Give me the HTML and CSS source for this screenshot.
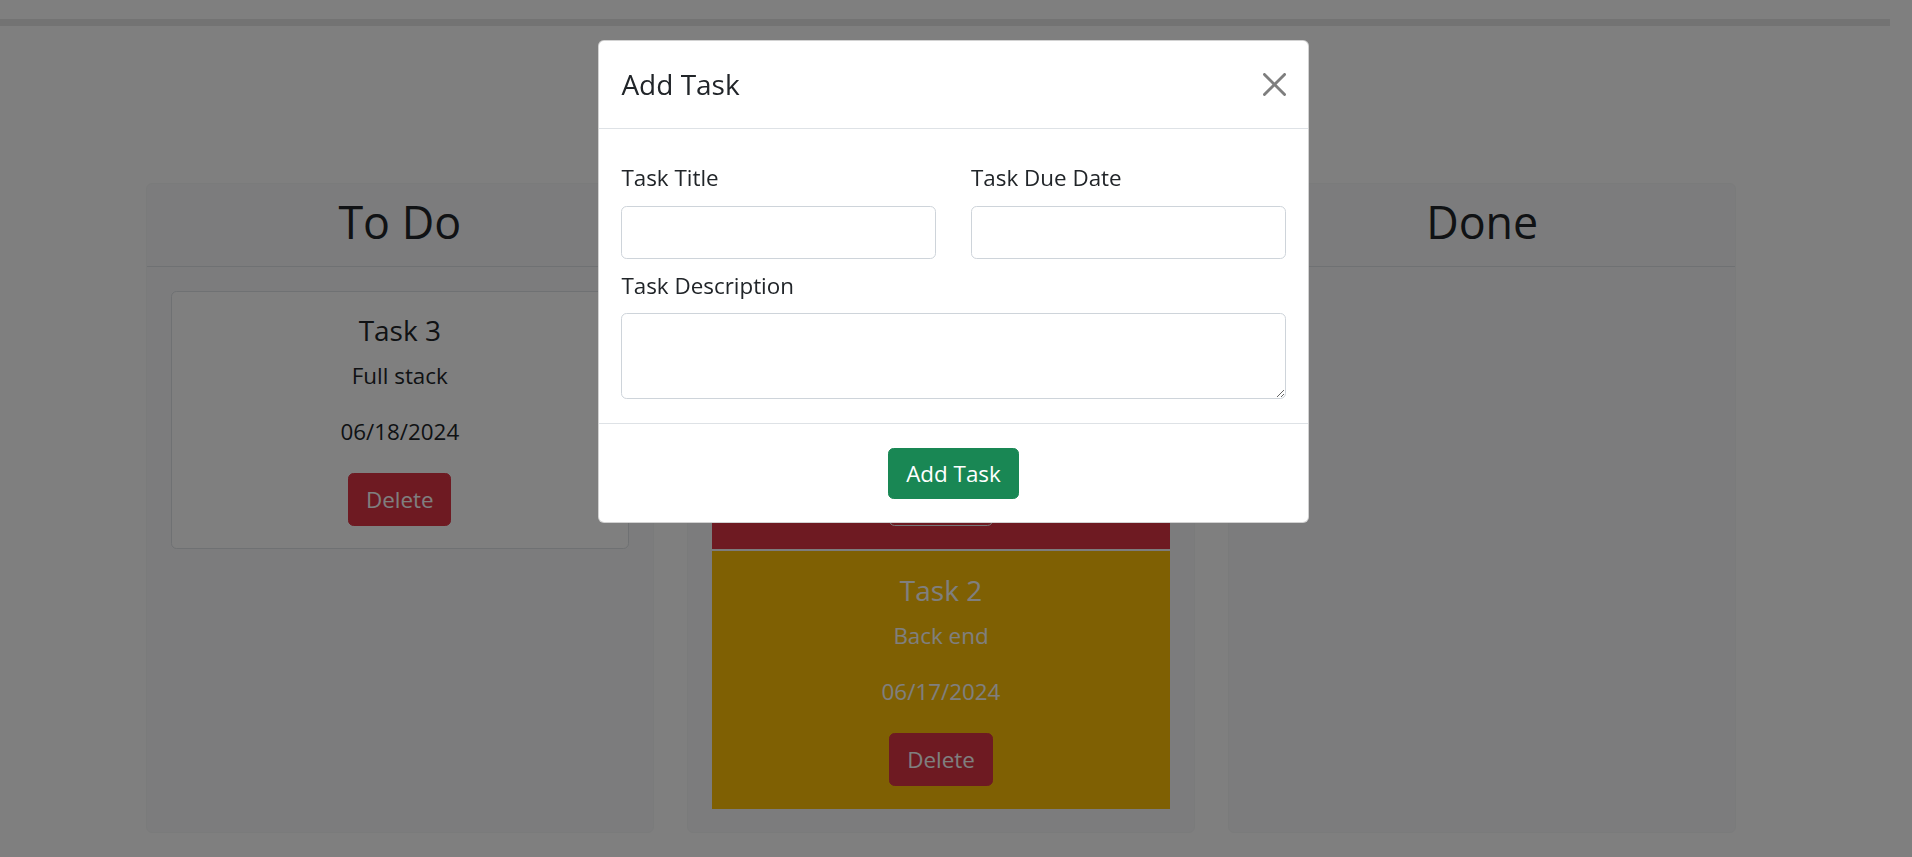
FILE: index.html
```html
<!DOCTYPE html>
<html lang="en">
<head>
<meta charset="utf-8">
<title>Task Board</title>
<link rel="stylesheet" href="styles.css">
</head>
<body>
  <div class="topbar"></div>
  <main class="board">
    <section class="column">
      <header class="column-header"><h2>To Do</h2></header>
      <div class="column-body">
        <article class="task-card">
          <h5 class="task-title">Task 3</h5>
          <p class="task-desc">Full stack</p>
          <p class="task-date">06/18/2024</p>
          <button class="btn btn-danger">Delete</button>
        </article>
      </div>
    </section>
    <section class="column">
      <header class="column-header"><h2>In Progress</h2></header>
      <div class="column-body stack">
        <article class="task-card card-danger">
          <h5 class="task-title">Task 1</h5>
          <p class="task-desc">Front end</p>
          <p class="task-date">06/16/2024</p>
          <button class="btn btn-danger btn-outlined">Delete</button>
        </article>
        <article class="task-card card-warning">
          <h5 class="task-title">Task 2</h5>
          <p class="task-desc">Back end</p>
          <p class="task-date">06/17/2024</p>
          <button class="btn btn-danger">Delete</button>
        </article>
      </div>
    </section>
    <section class="column">
      <header class="column-header"><h2>Done</h2></header>
      <div class="column-body"></div>
    </section>
  </main>

  <div class="backdrop"></div>

  <div class="modal">
    <div class="modal-header">
      <h5 class="modal-title">Add Task</h5>
      <button class="btn-close" aria-label="Close">
        <svg viewBox="0 0 16 16" width="23" height="23"><path d="M.293.293a1 1 0 0 1 1.414 0L8 6.586 14.293.293a1 1 0 1 1 1.414 1.414L9.414 8l6.293 6.293a1 1 0 0 1-1.414 1.414L8 9.414l-6.293 6.293a1 1 0 0 1-1.414-1.414L6.586 8 .293 1.707a1 1 0 0 1 0-1.414z"/></svg>
      </button>
    </div>
    <div class="modal-body">
      <div class="form-row">
        <div class="form-group">
          <label class="form-label" for="title">Task Title</label>
          <input class="form-control" id="title" type="text">
        </div>
        <div class="form-group">
          <label class="form-label" for="due">Task Due Date</label>
          <input class="form-control" id="due" type="text">
        </div>
      </div>
      <div class="form-group desc-group">
        <label class="form-label" for="desc">Task Description</label>
        <textarea class="form-control textarea" id="desc"></textarea>
      </div>
    </div>
    <div class="modal-footer">
      <button class="btn btn-success">Add Task</button>
    </div>
  </div>
</body>
</html>
```

FILE: styles.css
```css
* {
  box-sizing: border-box;
}

html, body {
  margin: 0;
  padding: 0;
}

body {
  width: 1912px;
  height: 857px;
  overflow: hidden;
  background: #ffffff;
  font-family: "Open Sans", "Liberation Sans", sans-serif;
  font-size: 22.4px;
  line-height: 1.5;
  color: #212529;
}

.topbar {
  width: 1890px;
  height: 7px;
  margin-top: 19px;
  background: #e6e6e6;
}

.board {
  width: 1590px;
  margin-left: 146px;
  margin-top: 157px;
  display: grid;
  grid-template-columns: repeat(3, 1fr);
  column-gap: 33.6px;
}

.column {
  height: 650px;
  background: #f8f9fa;
  border: 1px solid #f5f6f7;
  border-radius: 6px;
  display: flex;
  flex-direction: column;
}

.column-header {
  padding: 10.7px 0 17.5px;
  border-bottom: 1px solid #dee2e6;
  text-align: center;
}

.column-header h2 {
  margin: 0;
  font-size: 44.8px;
  font-weight: 400;
  line-height: 1.2;
}

.column-body {
  padding: 24px;
  display: flex;
  flex-direction: column;
}

.column-body.stack {
  gap: 2px;
}

.task-card {
  height: 258px;
  background: #ffffff;
  border: 1px solid #dee2e6;
  border-radius: 5.6px;
  padding: 22.4px;
  text-align: center;
  display: flex;
  flex-direction: column;
  align-items: center;
}

.card-danger {
  background: #dc3545;
  border-color: #dc3545;
  border-radius: 0;
  color: #ffffff;
}

.card-warning {
  background: #ffc107;
  border-color: #ffc107;
  border-radius: 0;
  color: #ffffff;
}

.task-title {
  margin: 0 0 11.2px;
  font-size: 28px;
  font-weight: 400;
  line-height: 1.2;
}

.task-desc {
  margin: 0 0 22.4px;
}

.task-date {
  margin: 0 0 24.5px;
}

.btn {
  font-family: inherit;
  font-size: 22.4px;
  line-height: 33.6px;
  padding: 8.4px 16.8px;
  border-radius: 5.6px;
  border: 1px solid transparent;
  color: #ffffff;
  cursor: pointer;
}

.btn-danger {
  background: #dc3545;
  border-color: #dc3545;
}

.btn-outlined {
  border-color: #f2f2f2;
}

.btn-success {
  background: #198754;
  border-color: #198754;
  padding: 7.7px 16.8px;
}

.backdrop {
  position: fixed;
  inset: 0;
  background: rgba(0, 0, 0, 0.5);
}

.modal {
  position: fixed;
  left: 598px;
  top: 40px;
  width: 711px;
  background: #ffffff;
  border: 1px solid rgba(0, 0, 0, 0.175);
  border-radius: 6px;
}

.modal-header {
  display: flex;
  align-items: center;
  justify-content: space-between;
  padding: 22.4px;
  border-bottom: 1px solid #dee2e6;
}

.modal-title {
  margin: 0;
  font-size: 28px;
  font-weight: 400;
  line-height: 42px;
}

.btn-close {
  width: 23px;
  height: 23px;
  padding: 0;
  border: 0;
  background: transparent;
  display: flex;
  opacity: 0.5;
  cursor: pointer;
}

.btn-close svg {
  fill: #000000;
}

.modal-body {
  padding: 32.7px 22.4px 24px;
}

.form-row {
  display: grid;
  grid-template-columns: 1fr 1fr;
  column-gap: 35px;
}

.form-group {
  display: flex;
  flex-direction: column;
}

.desc-group {
  margin-top: 10px;
}

.form-label {
  display: block;
  margin-bottom: 11.2px;
  line-height: 33.6px;
}

.form-control {
  width: 100%;
  height: 52.4px;
  border: 1px solid #ced4da;
  border-radius: 5.6px;
  background: #ffffff;
  font-family: inherit;
  font-size: 22.4px;
  padding: 8.4px 16.8px;
  color: #212529;
}

.textarea {
  height: 86px;
  resize: vertical;
  display: block;
}

.modal-footer {
  display: flex;
  justify-content: center;
  padding: 24px 22.4px 22.3px;
  border-top: 1px solid #dee2e6;
}
```
